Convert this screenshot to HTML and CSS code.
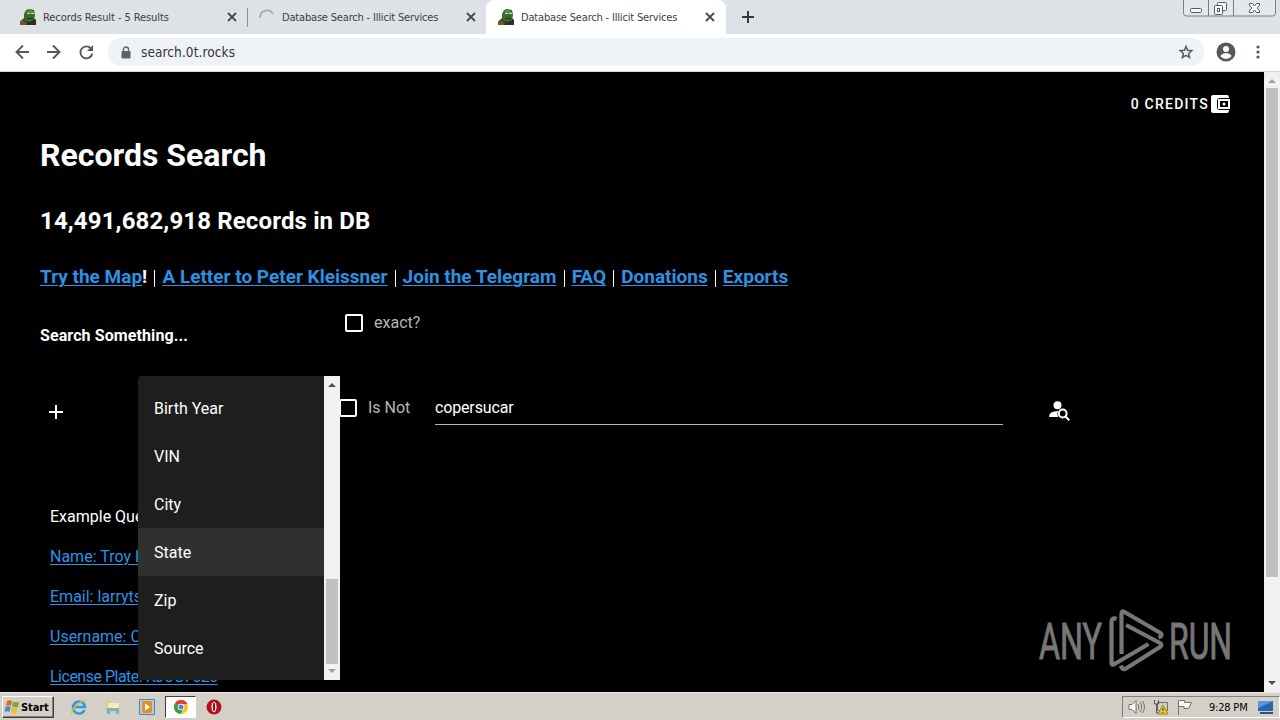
FILE: index.html
```html
<!DOCTYPE html>
<html lang="en">
<head>
  <meta charset="UTF-8">
  <title>Database Search - Illicit Services</title>
  <link rel="stylesheet" href="styles.css">
</head>
<body>
  <svg width="0" height="0" class="defs">
    <symbol id="frog" viewBox="0 0 16 16">
      <path d="M0 13l3-3 3-2h7l3 3v5H0z" fill="#352c25"/>
      <path d="M4 5l2-4 3-1 5 1 1 5-1 5-4 2-5-1-1-3z" fill="#356b2c"/>
      <path d="M6 2l4-1 4 2v1H8z" fill="#559044"/>
      <path d="M7 4h3v1H7zM11 4h3v1h-3z" fill="#d5dfc2"/>
      <path d="M0 12l3-1 4 3-1 2H0z" fill="#76532c"/>
      <path d="M7 9h6v1H7z" fill="#1d3219"/>
    </symbol>
    <symbol id="cross" viewBox="0 0 10 10"><path d="M1 1l8 8M9 1L1 9" stroke="#45494d" stroke-width="1.8"/></symbol>
  </svg>

  <!-- Tabs -->
  <div class="tabs">
    <div class="tab first">
      <svg class="fav"><use href="#frog"/></svg><span class="title t1">Records Result - 5 Results</span><svg class="close"><use href="#cross"/></svg>
    </div>
    <div class="tab second">
      <svg class="fav" viewBox="0 0 16 16"><path d="M1 9a7 7 0 0 1 13-4" fill="none" stroke="#a5a8ac" stroke-width="1.7"/></svg><span class="title">Database Search - Illicit Services</span><svg class="close"><use href="#cross"/></svg>
    </div>
    <div class="tab active">
      <svg class="fav"><use href="#frog"/></svg><span class="title">Database Search - Illicit Services</span><svg class="close"><use href="#cross"/></svg>
    </div>
    <svg class="plus" viewBox="0 0 12 12"><path d="M6 0v12M0 6h12" stroke="#34383c" stroke-width="2"/></svg>
    <svg class="winbuttons" viewBox="0 0 94 17">
      <path d="M.5 0v13q0 3 3 3h86q3 0 3-3V0M25.500 0v16M50.500 0v16" fill="#e4e7ec" stroke="#7a7f87"/>
      <g fill="#f8f8f8" stroke="#555b64">
        <rect x="7.500" y="8.500" width="11" height="4" rx="1"/>
        <rect x="34.500" y="2.500" width="9" height="8" rx="1"/>
        <rect x="31.500" y="5.500" width="8" height="9" rx="1"/>
        <rect x="34.500" y="8.500" width="2" height="3"/>
        <path d="M66.500 3.500h3l2 2.500 2-2.500h3v2L74 8l2.500 2.500v2h-3l-2-2.500-2 2.500h-3v-2L69 8l-2.500-2.500z"/>
      </g>
    </svg>
  </div>

  <!-- Address bar -->
  <div class="toolbar">
    <svg class="nav" viewBox="0 0 96 20" fill="none" stroke="#55595e" stroke-width="1.9">
      <path d="M15 10H3M9 3.500L2.500 10 9 16.500M33 10h12M39 3.500l6.500 6.500-6.500 6.500"/>
      <path d="M77 6.500a6 6 0 1 0 1.300 5"/><path d="M79 3v6h-6z" fill="#55595e" stroke="none"/>
    </svg>
    <div class="address">
      <svg class="lock" viewBox="0 0 10 13"><path d="M2.500 6V3.500a2.500 2.500 0 0 1 5 0V6" fill="none" stroke="#5f6368" stroke-width="1.400"/><rect x=".5" y="5" width="9" height="7.500" rx="1" fill="#5f6368"/></svg>
      <span class="url">search.0t.rocks</span>
      <svg class="star" viewBox="0 0 16 16"><path d="M8 2.500l1.600 3.800 4.200.4-3.200 2.800 1 4L8 11.400l-3.600 2.100 1-4-3.200-2.800 4.200-.4z" fill="none" stroke="#55595e" stroke-width="1.500"/></svg>
    </div>
    <svg class="user" viewBox="0 0 20 20"><circle cx="10" cy="10" r="9.500" fill="#55595e"/><circle cx="10" cy="7" r="3" fill="#fff"/><path d="M4.200 14q2.300-3 5.800-3t5.800 3q-2.300 3-5.800 3t-5.800-3z" fill="#fff"/></svg>
    <svg class="dots" viewBox="0 0 4 16" fill="#55595e"><circle cx="2" cy="3" r="1.600"/><circle cx="2" cy="8" r="1.600"/><circle cx="2" cy="13" r="1.600"/></svg>
  </div>

  <div class="view">
    <main class="page">
      <div class="credits"><span>0 CREDITS</span>
        <svg viewBox="0 0 20 18"><path d="M2 0h14q2 0 2 2v1H9Q6 3 6 6v6q0 3 3 3h9v1q0 2-2 2H2q-2 0-2-2V2Q0 0 2 0z" fill="#fff"/><rect x="8" y="5" width="10" height="8" fill="none" stroke="#fff" stroke-width="2"/><circle cx="13" cy="9" r="1.500" fill="#fff"/></svg>
      </div>
      <h1>Records Search</h1>
      <h2>14,491,682,918 Records in DB</h2>
      <h3><a href="#">Try the Map</a>! <i></i> <a href="#">A Letter to Peter Kleissner</a> <i></i> <a href="#">Join the Telegram</a> <i></i> <a href="#">FAQ</a> <i></i> <a href="#">Donations</a> <i></i> <a href="#">Exports</a></h3>

      <div class="search-head">
        <strong>Search Something...</strong>
        <label class="check"><span class="box"></span>exact?</label>
      </div>

      <div class="search-row">
        <svg class="add" viewBox="0 0 14 14"><path d="M7 0v14M0 7h14" stroke="#fff" stroke-width="2"/></svg>
        <label class="check not"><span class="box"></span><span class="not-text">Is Not</span></label>
        <div class="field">copersucar</div>
        <svg class="find" viewBox="0 0 21 20"><circle cx="8.500" cy="4.300" r="4" fill="#fff"/><path d="M0 16q0-6 9-6-1.500 3 .2 6z" fill="#fff"/><circle cx="13.700" cy="12.500" r="3.900" fill="#000" stroke="#fff" stroke-width="2"/><path d="M16.500 15.500l3.700 3.700" stroke="#fff" stroke-width="2"/></svg>
      </div>

      <div class="examples">
        <p>Example Queries</p>
        <p><a href="#">Name: Troy Hunt</a></p>
        <p><a href="#">Email: larryts</a></p>
        <p><a href="#">Username: C</a></p>
        <p><a href="#" class="plate">License Plate: KJCG7520</a></p>
      </div>
    </main>
    <div class="scroll">
      <svg viewBox="0 0 8 4"><path d="M0 4l4-4 4 4z" fill="#a0a0a0"/></svg>
      <div class="thumb"></div>
      <svg viewBox="0 0 8 4"><path d="M0 0l4 4 4-4z" fill="#505050"/></svg>
    </div>

    <!-- Field dropdown -->
    <div class="menu">
      <ul>
        <li>Birth Year</li>
        <li>VIN</li>
        <li>City</li>
        <li class="hover">State</li>
        <li>Zip</li>
        <li>Source</li>
      </ul>
      <div class="scroll menu-scroll">
        <svg viewBox="0 0 8 4"><path d="M0 4l4-4 4 4z" fill="#505050"/></svg>
        <div class="thumb"></div>
        <svg viewBox="0 0 8 4"><path d="M0 0l4 4 4-4z" fill="#a0a0a0"/></svg>
      </div>
    </div>

    <!-- Watermark -->
    <svg class="watermark" viewBox="0 0 200 66">
      <g fill="#777" stroke="#777" stroke-width="1" font-family="Roboto, sans-serif" font-size="50">
        <text x="3" y="50.500" textLength="63" lengthAdjust="spacingAndGlyphs">ANY</text>
        <text x="133" y="50.500" textLength="63" lengthAdjust="spacingAndGlyphs">RUN</text>
      </g>
      <g fill="none" stroke="#777" stroke-width="4.200" stroke-linejoin="round">
        <path d="M85.500 46V6q0-4 3-2l36 21q3 3-2 4.500"/>
        <path d="M90 17l34 18q3 2 0 4L90 60.500q-4 2-5-3"/>
        <path d="M80.500 11q-5-2-5 3v41q0 3 3 1l34-20"/>
      </g>
    </svg>
  </div>

  <!-- Taskbar -->
  <div class="taskbar">
    <div class="start">
      <svg viewBox="0 0 16 16"><path d="M3 2q3-1.500 5 .3L7 7Q4.500 5.500 2 7z" fill="#e8642b"/><path d="M9 2.500q3 1.500 6 0L14 8q-3 1-6-.5z" fill="#79ad38"/><path d="M1.500 8q3-1.500 5 .2L5.500 13Q3 11.500.5 13z" fill="#3e8cd0"/><path d="M7.500 8.500q3 1.500 6 .3L12.500 14q-3 1-6-.6z" fill="#f1bc32"/></svg>Start
    </div>
    <svg class="app" viewBox="0 0 16 16"><path d="M13.500 11a6 6 0 1 1 .5-3H3.500" fill="none" stroke="#2f9ddd" stroke-width="2.600"/><path d="M1 15Q-1 12 6 6t9-4" fill="none" stroke="#e9b93b" stroke-width="1.300"/></svg>
    <svg class="app" viewBox="0 0 16 16"><path d="M1 2h5l1 2h8v10H1z" fill="#e8ca70"/><path d="M3 4h11v5H3z" fill="#f6eab5"/><path d="M2 15V9h12v6h-3v-3H5v3z" fill="#6bb5dc"/></svg>
    <svg class="app" viewBox="0 0 16 16"><path d="M.5.5h15v15H.5z" fill="#a9cde9" stroke="#4c86b8"/><rect x="3" y="2" width="10" height="12" rx="2" fill="#ed8a1c"/><path d="M6 4.500v7L11 8z" fill="#fff"/></svg>
    <div class="current"><svg viewBox="0 0 16 16"><circle cx="8" cy="8" r="7" fill="#fbc116"/><path d="M8 8L2 4.300A7 7 0 0 1 14.300 5H8z" fill="#e33b2e"/><path d="M8 8l-6-3.700A7 7 0 0 0 7.500 15L10 10z" fill="#2da04b"/><circle cx="8" cy="8" r="3.300" fill="#fff"/><circle cx="8" cy="8" r="2.500" fill="#4285f4"/></svg></div>
    <svg class="app opera" viewBox="0 0 16 16"><circle cx="8" cy="8" r="7.500" fill="#b50f19"/><ellipse cx="8" cy="8" rx="2.500" ry="5.300" fill="#fff"/><ellipse cx="8" cy="8" rx="1.200" ry="4.400" fill="#a10d16"/></svg>
    <div class="tray">
      <svg viewBox="0 0 17 16"><path d="M1 5.500h3l4-4v13l-4-4H1z" fill="#f8f8f8" stroke="#74716c"/><path d="M10 5q2 3 0 6M12 3q3.500 5 0 10M14.500 2q4 6 0 12" fill="none" stroke="#77736d"/></svg>
      <svg viewBox="0 0 17 16"><path d="M5.500 3.500h10v8h-10z" fill="#cfcdc8" stroke="#6d6b68"/><path d="M2.500 1v4h4V1M4.500 5v9h4" fill="none" stroke="#555"/><path d="M11 6l5 9H6z" fill="#f4cc20" stroke="#a68115"/><path d="M11 9v3M11 13v1" stroke="#333"/></svg>
      <svg viewBox="0 0 17 16"><path d="M2.500 16V1.500h6v2h7l-3 6H8v-2H2.500" fill="#fafafa" stroke="#77736d"/></svg>
      <time>9:28 PM</time>
      <svg viewBox="0 0 17 16"><path d="M1 2h15v10H1z" fill="#2567b5"/><path d="M1 2h15L1 9z" fill="#5b98d7"/><path d="M3 14h13" stroke="#3b526b" stroke-width="2"/></svg>
    </div>
  </div>
</body>
</html>
```

FILE: styles.css
```css
* {
  box-sizing: border-box;
}
body {
  margin: 0;
  width: 1280px;
  height: 720px;
  overflow: hidden;
  display: flex;
  flex-direction: column;
  font-family: Roboto, sans-serif;
  background: #000;
}
svg {
  display: block;
  flex: none;
}
.defs {
  position: absolute;
}
/* Tabs */
.tabs {
  height: 34px;
  flex: none;
  display: flex;
  background: #dee1e6;
  font: 11px "DejaVu Sans Condensed", "DejaVu Sans", sans-serif;
  color: #3c4043;
}
.tab {
  display: flex;
  align-items: center;
  height: 34px;
  padding-right: 14px;
}
.first {
  width: 247px;
  padding-left: 20px;
}
.second {
  width: 239px;
  padding-left: 12px;
  background: linear-gradient(#8d9196, #8d9196) 0 8px / 1px 19px no-repeat;
}
.active {
  width: 240px;
  padding-left: 12px;
  background: #fff;
  border-radius: 8px 8px 0 0;
}
.fav {
  width: 16px;
  height: 16px;
  margin-right: 7px;
}
.title {
  white-space: nowrap;
  letter-spacing: -0.18px;
}
.t1 {
  letter-spacing: -0.08px;
}
.close {
  width: 10px;
  height: 10px;
  margin-left: auto;
}
.second .close {
  margin-right: -4px;
}
.active .close {
  margin-right: -3px;
}
.first .close {
  margin-right: -4px;
}
.plus {
  width: 12px;
  height: 12px;
  margin: 11px 0 0 16px;
}
.winbuttons {
  width: 94px;
  height: 17px;
  margin: 0 3px 0 auto;
}
/* Address bar */
.toolbar {
  height: 38px;
  flex: none;
  display: flex;
  align-items: center;
  padding-bottom: 1px;
  background: #fff;
  border-bottom: 1px solid #d5d7da;
}
.nav {
  width: 96px;
  height: 20px;
  margin-left: 14px;
}
.address {
  width: 1096px;
  height: 28px;
  margin-left: -2px;
  padding: 0 10px 0 13px;
  display: flex;
  align-items: center;
  border-radius: 14px;
  background: #f0f3f5;
}
.lock {
  width: 10px;
  height: 13px;
  margin-right: 10px;
}
.url {
  font: 13.5px "DejaVu Sans Condensed", "DejaVu Sans", sans-serif;
  letter-spacing: 0.1px;
  color: #303438;
}
.star {
  width: 16px;
  height: 16px;
  margin-left: auto;
}
.user {
  width: 20px;
  height: 20px;
  margin-left: 12px;
}
.dots {
  width: 4px;
  height: 16px;
  margin-left: 20px;
}
/* Page */
.view {
  position: relative;
  height: 620px;
  flex: none;
  display: flex;
  overflow: hidden;
  color: #fff;
}
.page {
  width: 1264px;
  padding-left: 40px;
  background: #000;
}
.credits {
  height: 63px;
  padding: 1px 33px 0 0;
  display: flex;
  align-items: center;
  justify-content: flex-end;
  font-size: 14px;
  font-weight: 500;
  letter-spacing: 1.25px;
}
.credits span {
  margin-right: 1px;
}
.credits svg {
  width: 20px;
  height: 18px;
  margin-left: 1px;
}
h1, h2, h3 {
  margin: 0;
}
h1 {
  font-size: 32px;
  font-weight: 700;
  line-height: 40px;
}
h2 {
  margin-top: 29px;
  font-size: 24px;
  font-weight: 700;
  line-height: 34px;
  letter-spacing: 0.14px;
}
h3 {
  margin-top: 23px;
  font-size: 19px;
  font-weight: 700;
  line-height: 32px;
}
h3 i {
  display: inline-block;
  width: 1px;
  height: 17px;
  margin: 0 2.3px 0 2.4px;
  background: #fff;
  vertical-align: -4px;
}
a {
  color: #2d91e4;
  text-underline-offset: 2px;
  text-decoration-thickness: 1px;
}
.search-head {
  display: flex;
  height: 75px;
  padding-top: 18px;
  font-size: 16px;
  line-height: 24px;
}
.search-head strong {
  width: 305px;
  padding-top: 13px;
  font-weight: 700;
  letter-spacing: 0.1px;
}
.check {
  display: flex;
  align-items: center;
  height: 24px;
  color: #b5b5b5;
}
.box {
  width: 18px;
  height: 18px;
  margin-right: 11px;
  border: 2px solid #fff;
  border-radius: 2px;
}
.search-row {
  display: flex;
  height: 137px;
  padding-top: 28px;
}
.add {
  width: 14px;
  height: 14px;
  margin: 9px 0 0 9px;
}
.not {
  width: 96px;
  margin-left: 276px;
}
.not-text {
  padding-bottom: 2px;
}
.field {
  width: 568px;
  height: 29px;
  border-bottom: 1px solid #b5b5b5;
  line-height: 24px;
  letter-spacing: -0.15px;
}
.find {
  width: 21px;
  height: 20px;
  margin: 5px 0 0 46px;
}
.examples {
  padding-left: 10px;
}
.examples p {
  height: 24px;
  margin: 0 0 16px;
  line-height: 24px;
}
.plate {
  letter-spacing: -0.5px;
}
/* Scrollbars */
.scroll {
  width: 16px;
  padding: 7px 2px;
  display: flex;
  flex-direction: column;
  align-items: center;
  background: #f1f1f1;
}
.scroll svg {
  width: 8px;
  height: 4px;
}
.thumb {
  width: 12px;
  height: 489px;
  margin: 5px 0 auto;
  background: #c1c1c1;
}
/* Dropdown */
.menu {
  position: absolute;
  left: 138px;
  top: 304px;
  width: 202px;
  height: 304px;
  display: flex;
  overflow: hidden;
  background: #1e1e1e;
  border-radius: 4px 0 0 4px;
}
.menu ul {
  width: 186px;
  margin: 0;
  padding: 8px 0;
  list-style: none;
}
.menu li {
  height: 48px;
  padding-left: 16px;
  line-height: 50px;
}
.menu .hover {
  background: #303030;
}
.menu-scroll .thumb {
  height: 85px;
  margin: auto 0 5px;
}
.watermark {
  position: absolute;
  left: 1036px;
  top: 536px;
  width: 200px;
  height: 66px;
}
/* Taskbar */
.taskbar {
  height: 28px;
  flex: none;
  display: flex;
  align-items: center;
  padding: 1px 0 0 2px;
  background: #d4d0c8;
  border-top: 1px solid #eeece7;
}
.start {
  width: 52px;
  height: 22px;
  display: flex;
  align-items: center;
  gap: 1px;
  padding-left: 1px;
  border: 1px solid;
  border-color: #fff #404040 #404040 #fff;
  box-shadow: inset -1px -1px #808080;
  color: #000;
  font: bold 11px "DejaVu Sans Condensed", "DejaVu Sans", sans-serif;
  letter-spacing: -0.1px;
}
.start svg {
  width: 16px;
  height: 16px;
}
.app {
  width: 16px;
  height: 16px;
  margin-left: 18px;
}
.start + .app {
  margin-left: 17px;
}
.current {
  width: 31px;
  height: 22px;
  margin-left: 10px;
  padding: 2px 0 0 7px;
  background: #fff;
  border: 1px solid;
  border-color: #404040 #fff #fff #404040;
}
.current svg {
  width: 16px;
  height: 16px;
}
.opera {
  margin-left: 10px;
}
.tray {
  width: 158px;
  height: 22px;
  margin-left: auto;
  padding-left: 5px;
  display: flex;
  align-items: center;
  gap: 7px;
  border: 1px solid;
  border-color: #808080 #fff #fff #808080;
  color: #000;
}
.tray svg {
  width: 17px;
  height: 16px;
}
.tray time {
  margin: 0 3px 0 9px;
  font: 11px "DejaVu Sans Condensed", "DejaVu Sans", sans-serif;
  letter-spacing: -0.2px;
  white-space: nowrap;
}
```
